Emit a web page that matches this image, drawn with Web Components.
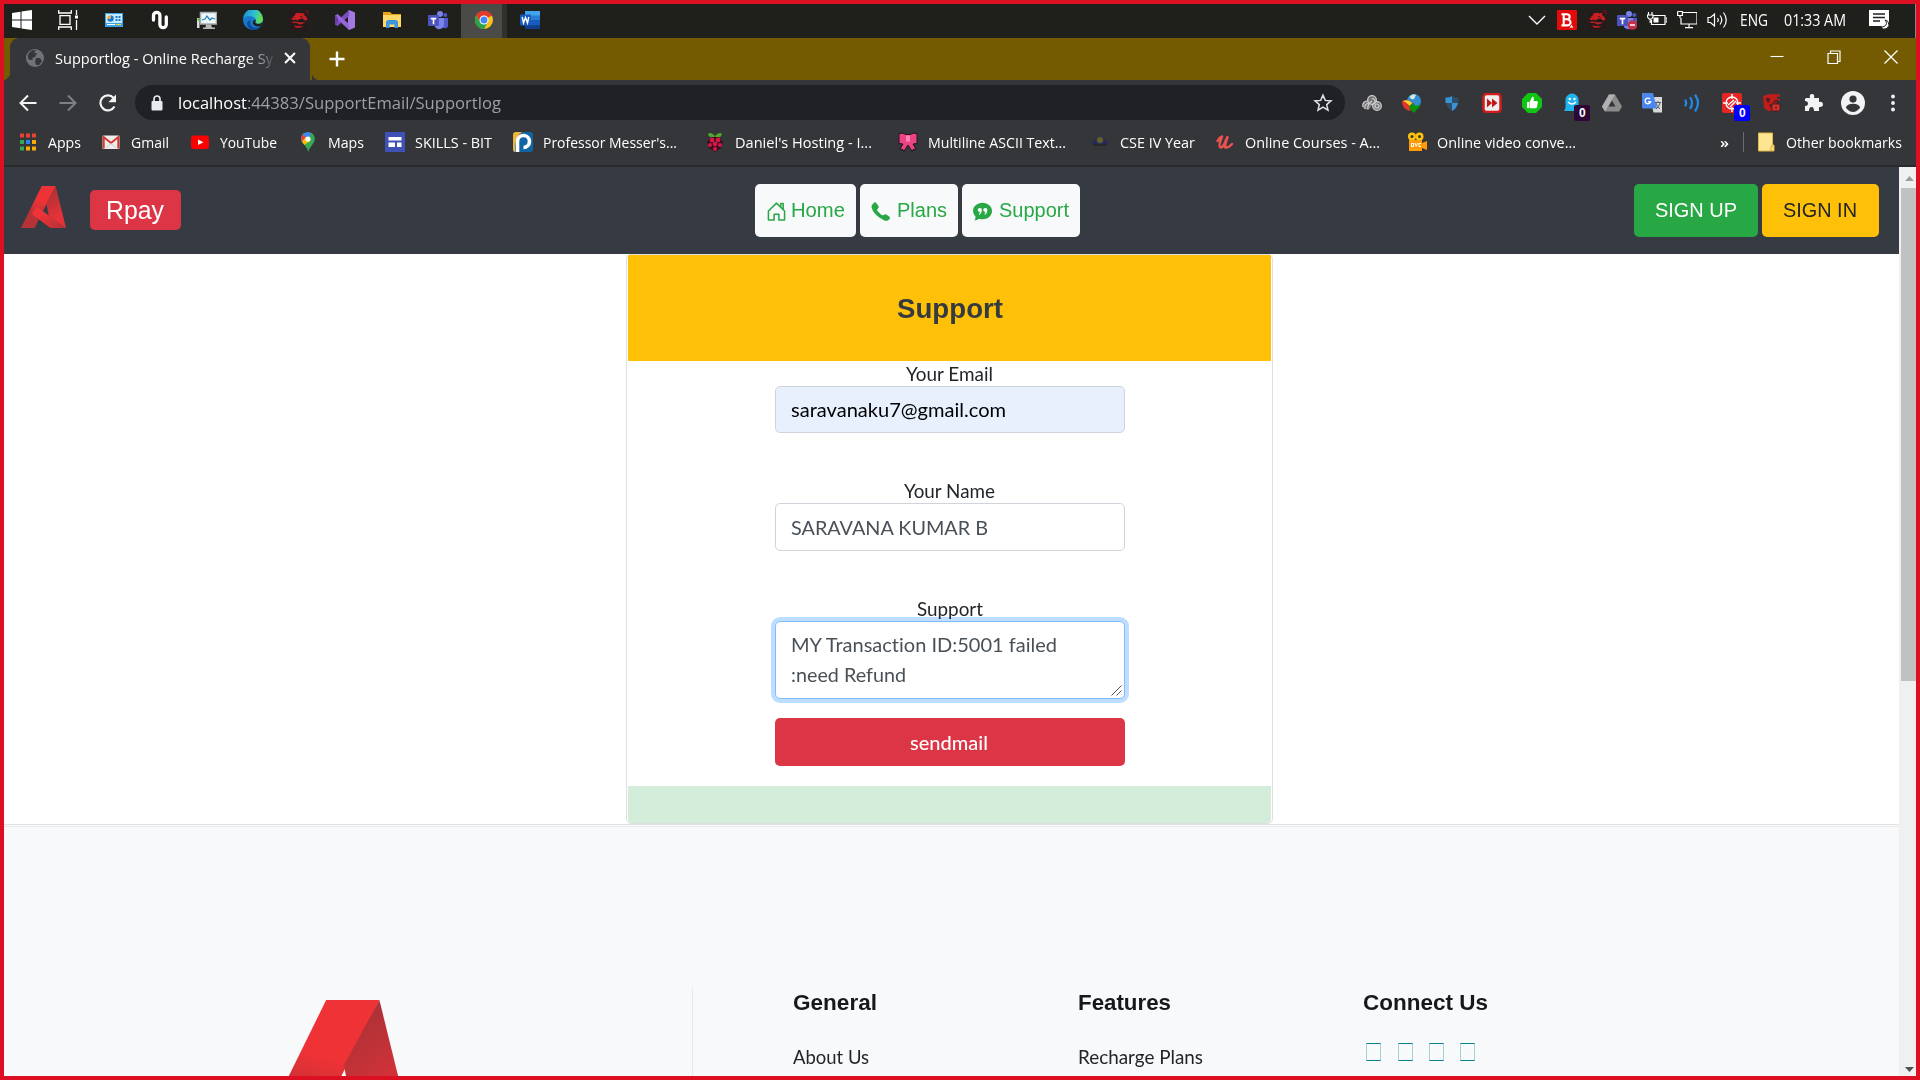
<!DOCTYPE html>
<html lang="en">
<head>
<meta charset="utf-8">
<title>Supportlog - Online Recharge System</title>
<style>
html,body{margin:0;padding:0;width:1920px;height:1080px;overflow:hidden;background:#dc1022}
</style>
</head>
<body>
<desktop-frame></desktop-frame>
<script>
const UI = '"Open Sans","Noto Sans",sans-serif';
const ARIAL = '"Liberation Sans",Arial,sans-serif';
const LATO = 'Lato,"Noto Sans",sans-serif';

const chromeArt = '<circle cx="10" cy="10" r="9" fill="#fbc21c"/><path d="M10 10 2.200 5.500A9 9 0 0 1 17.800 5.500z" fill="#e23b2e"/><path d="M10 5.500h7.800A9 9 0 0 0 2.200 5.500l3.900 6.700z" fill="#e23b2e"/><path d="M2.200 5.500A9 9 0 0 0 10 19l3.900-6.800L10 14 6.100 12.200z" fill="#2ba24c"/><circle cx="10" cy="10" r="4.500" fill="#fff"/><circle cx="10" cy="10" r="3.500" fill="#4285f4"/>';
const dragonArt = '<rect x=".5" y=".5" width="19" height="19" rx="2.500" fill="#231a1b" stroke="#30191c"/><path d="M15 .5h4.500V6Q18 2 15 .5z" fill="#6d101b"/><path d="M2 8.500L5.500 7 3.500 6.800 6.500 5 5.500 4.200Q9 2 12.500 3.200L16 3l-1.500 1.500Q17.500 6 18.500 10l-2.500.5-2.500-2-3 .5-1.500 1.500L6 9.500l-1.500 1zM1.500 12.500q4-1.500 7-.5 4 1 8.500-.5-3 2.700-6.500 3l-3-1.500zM5 15.500q5 1 9.500.8-4 2.500-8 1z" fill="#c91f22"/><path d="M11 5.800l3.500 1.400-3 .1z" fill="#231a1b"/>';
const teamsArt = '<circle cx="12" cy="4" r="3" fill="#7b83eb"/><circle cx="17.300" cy="5" r="2" fill="#5059c9"/><path d="M14 8h6v6a3 3 0 0 1-6 2z" fill="#5059c9"/><path d="M7 8h9v7a5 5 0 0 1-9 2z" fill="#7b83eb"/><rect y="5" width="11" height="11" rx="1" fill="#4b53bc"/><path d="M2.800 7.800h5.400v1.600H6.300v4.800H4.700V9.400H2.800z" fill="#fff"/>';
const logo = id => `<defs><linearGradient id="l${id}" x1=".6" y1="0" x2=".35" y2="1"><stop offset=".34" stop-color="#ee3236"/><stop offset=".7" stop-color="#b53236"/></linearGradient><linearGradient id="r${id}" x1="0" y1="0" x2=".3" y2="1"><stop offset="0" stop-color="#a23236"/><stop offset=".45" stop-color="#c43237"/><stop offset=".8" stop-color="#e43237"/></linearGradient><linearGradient id="c${id}" x1="0" y1="0" x2="1" y2="1"><stop offset=".3" stop-color="#f03338"/><stop offset="1" stop-color="#b03136"/></linearGradient></defs><path d="M58 0h39L38 126H0z" fill="url(#l${id})"/><path d="M97 0l29 126-48-36-7-39z" fill="url(#r${id})"/><path d="M44 62l82 64H82L33 86q-3-3 0-7z" fill="url(#c${id})"/>`;

const ICONS = {
windows:'<path d="M0 3l8.500-1.200v7.700H0zM9.500 1.600 20 0v9.500H9.500zM0 10.500h8.500v7.700L0 17zM9.500 10.500H20V20L9.500 18.400z" fill="#fff"/>',
taskview:'<g fill="none" stroke="#fff" stroke-width="1.300"><path d="M.7 0v3h12.600V0M.7 20v-3h12.600v3M2 5.700h10v8.600H2zM18.500 0v5M18.500 10v10"/></g><path d="M17 5.500h3v3h-3z" fill="#fff"/>',
panel:'<rect x="1" y="3" width="18" height="14" fill="#3ba3e4"/><rect x="2" y="4" width="16" height="9" fill="#c8ecff"/><circle cx="6.500" cy="8.500" r="3.300" fill="#fff"/><path d="M6.500 8.500V5.200a3.300 3.300 0 1 1-3.300 3.300z" fill="#2079c8"/><path d="M6.500 8.500H3.200a3.300 3.300 0 0 1 3.300-3.300z" fill="#f2a52c"/><path d="M11.500 6h2v2h-2zM14.500 6h2v2h-2zM11.500 9h2v2h-2zM14.500 9h2v2h-2z" fill="#2079c8"/><path d="M3 14.500h8" stroke="#fff"/><path d="M12 14.500h5" stroke="#ffd23b"/>',
nn:'<path d="M2.500 10V5.500a3.200 3.200 0 0 1 6.400 0v9a3.200 3.200 0 0 0 6.400 0V7" fill="none" stroke="#fff" stroke-width="3.300" stroke-linecap="round"/>',
monitor:'<rect x="3.500" y="2.500" width="16" height="11.500" fill="#eef8fc" stroke="#aaa" stroke-width="1.500"/><path d="M5 10l3-1 2-3 3 4 2-2 3 1" fill="none" stroke="#2a83b5" stroke-width="1.300"/><path d="M9 14.500h5l1 3h3V19H6v-1.500h2.500z" fill="#b8b8b8"/><path d="M0 8h2.500v10H0z" fill="#ddd"/><path d="M.5 8.500h2v2h-2z" fill="#31c52d"/>',
edge:'<defs><linearGradient id="eg" x1="0" y1="0" x2="1" y2=".3"><stop offset="0" stop-color="#1b83d4"/><stop offset=".6" stop-color="#2ec0d3"/><stop offset="1" stop-color="#63dc58"/></linearGradient></defs><circle cx="10" cy="10" r="10" fill="#1779cd"/><path d="M0 9A10 10 0 0 1 20 9c.5 4-5 6-7.500 4-1-1 1-2 0-4C10 5 2 5 0 9z" fill="url(#eg)"/><path d="M7.500 10c-2 6 4 10 10 6.500C14 22 5 21 4 14c0-3 3-4 3.500-4z" fill="#0f4c99"/><path d="M12.400 9.500c1 1.600-.8 2.500.3 3.600 2 1.600 5 .9 7-1.100l-1.700 3.700c-4 2.300-9-.7-8-3.700.3-1.500 1.500-2 2.400-2.500z" fill="#1f201c"/>',
dragon:dragonArt,
vs:'<path d="M14 0l6 2.500v15L14 20l-1-1V1z" fill="#a179e0"/><path d="M14 0v6L2.500 16 0 14.500V13z" fill="#7c4cc2"/><path d="M14 20v-6L2.500 4 0 5.500V7z" fill="#9466d8"/><path d="M0 5.500L2.500 7v6L0 14.500z" fill="#6a38ad"/>',
folder:'<path d="M1 2h7l2 2h9v13H1z" fill="#e8a317"/><path d="M1 5h18v12H1z" fill="#ffd869"/><path d="M4 18v-6.500L6 10h8l2 1.500V18h-3.500v-3.500h-5V18z" fill="#3c96dc"/>',
teams:teamsArt, chrome:chromeArt,
word:'<path d="M5 1h15v18H5z" fill="#41a5ee"/><path d="M5 5.500h15V10H5z" fill="#2b7cd3"/><path d="M5 10h15v4.500H5z" fill="#185abd"/><path d="M5 14.500h15V19H5z" fill="#103f91"/><rect y="4.500" width="11" height="11" rx="1" fill="#185abd"/><path d="M2.200 7l1.300 6L5.500 7.500 7.500 13l1.300-6" fill="none" stroke="#fff" stroke-width="1.400"/>',
chev:'<path d="M2 6l8 8 8-8" fill="none" stroke="#fff" stroke-width="1.400"/>',
bit:'<rect width="20" height="20" rx="1" fill="#e20b0b"/><path d="M4.500 4.200h5q3.200 0 3.200 2.500T9.500 9.300q4 .3 4 3.200t-4 2.900h-5M6.700 4v11.500M7 9.300h2.500" fill="none" stroke="#fff" stroke-width="2.100"/><path d="M12 18l2.500-4 2.500 4z" fill="#fff" stroke="#e20b0b" stroke-width=".8"/>',
teams2:teamsArt+'<circle cx="15.500" cy="15" r="4.800" fill="#c4314b"/><path d="M13 15h5" stroke="#fff" stroke-width="1.500"/>',
battery:'<g fill="none" stroke="#fff" stroke-width="1.200"><path d="M6 5.500h12v9H4.500V10"/><path d="M18.500 8h1.500v4h-1.500M1.500 2v3M5 2v3M.5 5h5.500v2L4.500 9H2L.5 7zM3.200 9v4"/></g><path d="M6.500 7.500h5v5h-5z" fill="#fff"/>',
network:'<g fill="none" stroke="#fff" stroke-width="1.200"><path d="M5.500 2.500H20v11.500H4V8M12 14v3.500M8 17.600h8M.6 1.500h4.800V5.500H3V8M.6 1.500v4H3"/></g>',
volume:'<g fill="none" stroke="#fff" stroke-width="1.200"><path d="M1 7.500h2.500L7.500 4v12l-4-3.500H1zM10.500 8q1.500 2 0 4M13 5.500q3.500 4.500 0 9M16.500 2.500q5.500 7.500 0 15"/></g>',
notif:'<path d="M0 0h20v16h-5v3l-3-3H0z" fill="#fff"/><path d="M4 4h12M4 7.500h12M4 11h7" stroke="#222" stroke-width="1.300"/><path d="M16 10q3.500 4-1 6.500-1.500.8-3.500.2Q14 20.500 18 18.500q3.500-3 1-7-1-1.200-3-1.500z" fill="#fff" stroke="#222"/>',
globe:'<circle cx="10" cy="10" r="9" fill="#70737a"/><path d="M3 7q1-3 4-4.500L11 2 9 5h3l-2 4-3 1 1 2H5l-2-1zM11 10h4l2 3-3 4h-3l-1-3z" fill="#35363a"/>',
x:'<path d="M4.500 4.500l11 11M15.500 4.500l-11 11" stroke="#fff" stroke-width="2.300"/>',
plus:'<path d="M10 2.500v15M2.500 10h15" stroke="#fff" stroke-width="2.400"/>',
min:'<path d="M3.500 9.500h13" stroke="#fff" stroke-width="1.100"/>',
restore:'<path d="M4 6.500h9.500V16.500H4zM6.500 6.500V4H16v10.500h-2.500" fill="none" stroke="#fff" stroke-width="1.200"/>',
close:'<path d="M3.500 3.500l13 13M16.500 3.500l-13 13" stroke="#fff" stroke-width="1.300"/>',
back:'<path d="M18.500 10H3M10 2.500L2.500 10l7.500 7.500" fill="none" stroke="#f1f3f4" stroke-width="2"/>',
fwd:'<path d="M1.500 10H17M10 2.500l7.500 7.500-7.500 7.500" fill="none" stroke="#7d8085" stroke-width="2"/>',
reload:'<path d="M16.500 13.500A7.500 7.500 0 1 1 15.600 5" fill="none" stroke="#f1f3f4" stroke-width="2.200"/><path d="M18 1.500v7.700h-7.700z" fill="#f1f3f4"/>',
lock:'<rect x="4.500" y="8" width="11" height="9.500" rx="1" fill="#e8eaed"/><path d="M7 8.500V6a3 3 0 0 1 6 0v2.500" fill="none" stroke="#e8eaed" stroke-width="1.700"/>',
star:'<path d="M10 2.200l2.300 5.200 5.700.5-4.300 3.700 1.300 5.600-5-3-5 3 1.300-5.600L2 7.900l5.700-.5z" fill="none" stroke="#e1e3e6" stroke-width="1.500"/>',
knot:'<circle cx="10" cy="8" r="5" fill="#777"/><circle cx="5" cy="12" r="4.500" fill="#777"/><circle cx="15" cy="13" r="4.500" fill="#777"/><g fill="none" stroke="#cfcfcf" stroke-width="1.200"><circle cx="10" cy="7" r="4.300"/><circle cx="15" cy="13" r="4.300"/><circle cx="15" cy="13" r="2"/><path d="M.8 14q-.5-6 5-6M3 16q-1-5 4-6M6 16.500q-1-5 4-8.500M10 5.500q3 0 3 3"/></g>',
idm:'<circle cx="12" cy="8" r="7" fill="#318ed5"/><path d="M7.500 4q3-4 6.500-2l-2 4q-3 1-4.500-2z" fill="#d5e8d8"/><path d="M0 8q7-3 11 3l-3 7Q0 16 0 8z" fill="#e43429"/><path d="M1 8q6-2 9 2l-2 3Q4 9 1 8z" fill="#ffd62d"/><path d="M8 12l4-2 1 3 6-1-7 8-5-5z" fill="#0b930b"/>',
shield:'<path d="M10 3q3 2 6.500 1.500Q17 14 10 18 3 14 3.500 4.500 7 5 10 3z" fill="#314d65"/><path d="M10 3v7H3.600q-.3-3 0-5.500Q7 5 10 3zM10 10h6q-1 5-6 8z" fill="#3893d7"/>',
ffw:'<rect x="1.500" y="1" width="17" height="18" rx="3" fill="#eee" stroke="#d21c1c" stroke-width="2.500"/><path d="M5 5.500l5 4.500-5 4.500zM10 5.500l5.500 4.500-5.500 4.500z" fill="#c21515"/>',
thumb:'<path d="M6 0h8l6 6v8l-6 6H6l-6-6V6z" fill="#12c512"/><path d="M5 9h2v6H5zM7.500 9l3-5.500q2 .3 1 4.500H15q1 0 .8 1.500L15 14q-.3 1.200-1.500 1.200h-6z" fill="#fff"/>',
ghost:'<path d="M3.500 15V7a6.500 6.500 0 0 1 13 0v8l2 3H2z" fill="#1fb3ef"/><circle cx="7.800" cy="6" r="1.200" fill="#fff"/><circle cx="12.500" cy="6" r="1.200" fill="#fff"/><path d="M6 9q4 4 8 0" fill="none" stroke="#fff" stroke-width="1.400"/>',
drive:'<path d="M7 1.500h6l7 12-3 5H3l-3-5z" fill="#8b8b8b"/><path d="M7 1.500h6l-3 5-7 12-3-5z" fill="#b1b1b1"/><path d="M10 7.500l3.500 6h-7z" fill="#35363a"/>',
translate:'<path d="M8 4h12.500v15.500h-9z" fill="#d8d8d8"/><path d="M0 0h11l4 15.500H1q-1 0-1-1z" fill="#4a87ee"/><path d="M8 6a2.800 2.800 0 1 0 .6 2.700H6.200" fill="none" stroke="#fff" stroke-width="1.400"/><path d="M13 9.500h6M16 8v2M14 10q1 4 4 6M18 10q-1 4-4 6" fill="none" stroke="#52616d"/>',
sound:'<g fill="none" stroke="#2189e8" stroke-width="2.300" stroke-linecap="round"><path d="M3.500 7.500q1.500 2.500 0 5M8.500 5q3 5 0 10M13.500 2.500q5 7.500 0 15"/></g>',
target:'<rect width="20" height="20" rx="2" fill="#e62525"/><g fill="none" stroke="#fff" stroke-width="1.400"><circle cx="10" cy="10" r="6"/><path d="M10 1v5M10 14v5M1 10h5M14 10h5M6 12l6-5M8 14l6-6"/></g>',
redlock:'<path d="M1 3q7-3 17-1.500v2.200h-3V6h3v1.500h-3L13 17l-7 1-4-3z" fill="#c01c1c"/><path d="M4 5h4l-1 5-2-1zM7 12l3-2-1 5z" fill="#482020"/><rect x="10" y="11" width="8" height="7" rx="1" fill="#d63131" stroke="#4a1c1c"/><path d="M12 11V9q2-2.500 4 0v2M14 13.500v2.500" fill="none" stroke="#502020" stroke-width="1.300"/>',
puzzle:'<path d="M3 5h4q-1-4 2-4t2 4h5v4q4-1 4 2.300T16 14v4h-5q0-4-2.500-4T6 18H2v-5q3 0 3-2.500T2 8V6z" fill="#f1f3f4"/>',
person:'<circle cx="10" cy="10" r="10" fill="#f1f3f4"/><circle cx="10" cy="6.700" r="3" fill="#35363a"/><path d="M4 14q1-3.300 6-3.300t6 3.300q-6 7-12 0z" fill="#35363a"/>',
dots:'<g fill="#f1f3f4"><circle cx="10" cy="3.500" r="1.900"/><circle cx="10" cy="10" r="1.900"/><circle cx="10" cy="16.500" r="1.900"/></g>',
apps:'<path d="M2 1.500h4v4H2zM8 1.500h4v4H8zM14 1.500h4v4h-4z" fill="#ea4335"/><path d="M2 8h4v4H2zM2 14.500h4v4H2z" fill="#34a853"/><path d="M8 8h4v4H8z" fill="#2a84f5"/><path d="M14 8h4v4h-4zM8 14.500h4v4H8zM14 14.500h4v4h-4z" fill="#fbab05"/>',
gmail:'<rect x="1.500" y="3.500" width="17" height="13.500" rx="1" fill="#eee"/><path d="M2.700 16.500V5L10 11l7.300-6v11.500" fill="none" stroke="#d8392d" stroke-width="2"/><path d="M5 16l5-4.500 5 4.500" fill="none" stroke="#ccc"/>',
youtube:'<rect x="1" y="3.500" width="18" height="13.500" rx="3" fill="#f00"/><path d="M8 7.500l5.500 2.800L8 13z" fill="#fff"/>',
maps:'<path d="M3.200 6.500Q3.500.2 10 .2t6.800 6.800q0 3-3 6.500-3 3.500-3.600 6.500Q9.500 16.500 6.500 13 3 10 3.200 6.500z" fill="#34a853"/><path d="M3.200 6.500Q3.500.2 10 .2l3.800 1.100-8.500 10Q3 9 3.200 6.500z" fill="#4285f4"/><path d="M4.800 2.600L8 5.300l-3.900 4.600q-2-4 .7-7.300z" fill="#ea4335"/><path d="M4 9.500l4-4.700 4.500 4L6.400 13z" fill="#fbbc04"/><circle cx="10" cy="7" r="2.600" fill="#fff"/>',
skills:'<rect width="20" height="20" fill="#3f51b5"/><path d="M3.500 5h13v3.500h-13zM3.500 10.500H10V15H3.500zM12 10.500h4.500V15H12z" fill="#fff"/>',
messer:'<rect width="20" height="20" rx="3" fill="#1265a5"/><path d="M3 0h6Q1 5 2 20 0 20 0 17V3q0-3 3-3z" fill="#efb63a"/><path d="M4.500 20V9a6 6 0 1 1 6 6.500" fill="none" stroke="#fff" stroke-width="3.600"/>',
pi:'<path d="M10 4Q6-1 3 2q1 4 6 4zM10 4q4-5 7-2-1 4-6 4z" fill="#50a72b"/><path d="M6 5h8l4 5-2 6-6 4-6-4-2-6z" fill="#351020"/><g fill="#d51745"><circle cx="7" cy="8" r="2.400"/><circle cx="13" cy="8" r="2.400"/><circle cx="10" cy="12" r="2.400"/><circle cx="5" cy="13" r="2"/><circle cx="15" cy="13" r="2"/><circle cx="10" cy="17" r="2"/></g>',
bow:'<path d="M1 1.500q4-1 7 1h4q3-2 7-1v10l-4 .5 3 5-3 .5-.8 2L10 13l-4.200 6.500-.8-2-3-.5 3-5-4-.5z" fill="#ed4385" stroke="#23161c"/><path d="M8 3.500h4v6H8z" fill="#ff84b1"/>',
cse:'<path d="M4 8h12l2 4H2z" fill="#25285a"/><circle cx="10" cy="8" r="3.500" fill="#686126" stroke="#29315f"/><path d="M3 13h14" stroke="#28282b" stroke-width="2"/>',
udemy:'<path d="M2.500 9q2-3.500 4.500-4.500-4 10-1.500 11 3 0 5.500-7.500l1.500-3q-3.500 10-2 10.500 3 .5 6.500-3.500" fill="none" stroke="#eb524f" stroke-width="2.500" stroke-linecap="round" stroke-linejoin="round"/>',
ovc:'<circle cx="5" cy="4.500" r="4" fill="#ffc20a"/><circle cx="12.500" cy="4.500" r="4" fill="#ffc20a"/><circle cx="5" cy="4.500" r="1.500" fill="#35363a"/><circle cx="12.500" cy="4.500" r="1.500" fill="#35363a"/><path d="M2 8h13v3l5-2v9l-5-2v3H2z" fill="#ff9c08"/><path d="M4.500 11.500h2v3h-2zM8 11l1.200 3.500L10.500 11M14 11.500h-2v3h2" fill="none" stroke="#fff"/>',
note:'<path d="M2.500 1h14v12h1.500v6H2.500z" fill="#ffe592" stroke="#dfb743"/><path d="M15 19v-4l2-2" fill="none" stroke="#dfb743" stroke-width="1.300"/>',
house:'<path d="M1.500 9.500L10 1.200l8.500 8.300V19h-6v-6h-5v6h-6zM14.500 5.500v-4h2.500v6.500" fill="none" stroke="#28a745" stroke-width="1.600" stroke-linejoin="round"/>',
phone:'<path d="M1.500 2.500L3.300.6Q4.500-.2 5.500 1L7.800 4.200q.7 1 0 2L6.600 7.700q-.3 1 .5 2.100l4 3.800q1 .7 2 .2l1.500-.7q1-.4 1.900.3l2.900 2q1 .9.400 1.900l-1.600 1.800q-1.600 1.300-4.700 0Q8 16.500 4.500 12.500 1.200 9 .5 5.500.4 3.600 1.500 2.500z" fill="#28a745"/>',
quote:'<path d="M10 .8c5.500 0 10 3.800 10 8.700s-4.500 8.700-10 8.700q-2 0-3.600-.6Q4.500 19.300 1.400 19.600q1.500-1.800 1.200-4.400Q0 12.800 0 9.500C0 4.600 4.500.8 10 .8z" fill="#28a745"/><path d="M5 8.500a2.200 2.200 0 1 1 4.400 0q0 3-2.500 4.800l-.8-.8q1.300-1 1.300-1.900Q5 10.500 5 8.500zM10.800 8.500a2.200 2.200 0 1 1 4.400 0q0 3-2.500 4.800l-.8-.8q1.300-1 1.300-1.900-2.400-.1-2.400-2.100z" fill="#fff"/>'
};

const fits = new Set();
function define(name, css, html, extra) {
  customElements.define(name, class extends HTMLElement {
    connectedCallback() {
      if (this.shadowRoot) return;
      const t = document.createElement('template');
      t.innerHTML = `<style>*{box-sizing:border-box}${css}</style>${typeof html === 'function' ? html(this) : html}`;
      this.attachShadow({mode:'open'}).append(t.content.cloneNode(true));
      if (extra) extra(this);
    }
  });
}

/* Text condensed or widened to a given width */
define('fit-text', ':host{display:block;white-space:pre;flex:none;overflow:visible;font-variant-ligatures:none}span{display:inline-block;transform-origin:0 50%}', '<span><slot></slot></span>', el => {
  el.style.width = el.getAttribute('w') + 'px';
  fits.add(el);
});
function fitAll() {
  for (const el of fits) {
    const s = el.shadowRoot.querySelector('span');
    s.style.transform = `scaleX(${el.getAttribute('w') / s.getBoundingClientRect().width})`;
  }
}
define('ui-icon', ':host{display:block;flex:none;width:20px;height:20px}svg{display:block;width:100%;height:100%}', el => `<svg viewBox="0 0 20 20">${ICONS[el.getAttribute('name')]}</svg>`);
define('brand-logo', ':host{display:block;flex:none}svg{display:block;width:100%;height:100%}', el => `<svg viewBox="0 0 126 126" preserveAspectRatio="none">${logo('g')}</svg>`);

define('task-cell', ':host{display:flex;width:46.200px;height:34px;justify-content:center;align-items:center;flex:none;padding-bottom:3px;box-sizing:border-box}:host([active]){background:linear-gradient(90deg,#4a4a47 41px,#30302d 41px)}:host([active]) ui-icon{margin-right:0}', el => `<ui-icon name="${el.getAttribute('name')}"></ui-icon>`);
define('task-bar', `:host{display:flex;height:34px;background:#1f201c;color:#fff;font:16px ${UI};align-items:center;justify-content:space-between;flex:none}
 div{display:flex;align-items:center}.l{margin-left:-5px}.t{gap:10px;height:34px;padding-bottom:3px}.e{height:34px;border-right:1px solid #888;width:17px;margin-bottom:-3px}`,
 `<div class="l">${['windows','taskview','panel','nn','monitor','edge','dragon','vs','folder','teams','chrome','word'].map(n=>`<task-cell name="${n}"${n==='chrome'?' active':''}></task-cell>`).join('')}</div>
 <div class="t">${['chev','bit','dragon','teams2','battery','network','volume'].map(n=>`<ui-icon name="${n}"></ui-icon>`).join('')}<fit-text w="28" style="margin-left:3px">ENG</fit-text><fit-text w="62" style="margin-left:6px">01:33 AM</fit-text><ui-icon name="notif" style="margin-left:13px"></ui-icon><div class="e"></div></div>`);

define('tab-strip', `:host{display:flex;height:42px;background:#745b02;color:#fff;font:15px ${UI};align-items:center;flex:none}
 .tab{margin-left:6px;width:300px;height:42px;background:#35363a;border-radius:9px 9px 0 0;display:flex;align-items:center;padding:0 0 2px 15px}
 .tab::before,.tab::after{content:"";width:8px;height:8px;align-self:flex-end;margin-bottom:-2px;flex:none}
 .tab::before{margin-left:-23px;margin-right:15px;background:radial-gradient(circle at 0 0,#745b02 8px,#35363a 8.500px)}
 .tab::after{margin-left:13px;background:radial-gradient(circle at 100% 0,#745b02 8px,#35363a 8.500px)}
 fit-text{margin-left:10px;-webkit-mask-image:linear-gradient(90deg,#000 190px,transparent 222px)}
 .w{margin-left:auto;display:flex;gap:37px;margin-right:15px;padding-bottom:5px}`,
 `<div class="tab"><ui-icon name="globe"></ui-icon><fit-text w="218">Supportlog - Online Recharge Sy</fit-text><ui-icon name="x" style="width:18px;height:18px;margin-left:8px"></ui-icon></div><ui-icon name="plus" style="margin-left:17px"></ui-icon><div class="w"><ui-icon name="min"></ui-icon><ui-icon name="restore"></ui-icon><ui-icon name="close"></ui-icon></div>`);

define('ext-icon', ':host{display:flex;position:relative;width:20px;height:20px;flex:none}b{position:absolute;left:12px;top:12px;width:16px;height:16px;border-radius:2px;color:#fff;font:bold 12px/16px "Liberation Sans",sans-serif;text-align:center;background:#2d0735}:host([blue]) b{background:#00f}', el => `<ui-icon name="${el.getAttribute('name')}"></ui-icon>${el.hasAttribute('count')?`<b>${el.getAttribute('count')}</b>`:''}`);
define('nav-toolbar', `:host{display:flex;height:45px;background:#35363a;align-items:center;flex:none;font:17px ${UI};padding-left:14px}
 .n{display:flex;gap:20px}.u{display:flex;align-items:center;width:1210px;height:35px;border-radius:18px;background:#202124;margin-left:17px;padding-left:12px;color:#fff}
 .p{color:#9aa0a6}.s{margin-left:auto;margin-right:12px}.e{display:flex;gap:20.050px;margin-left:17px;align-items:center}`,
 `<div class="n"><ui-icon name="back"></ui-icon><ui-icon name="fwd"></ui-icon><ui-icon name="reload"></ui-icon></div>
 <div class="u"><ui-icon name="lock"></ui-icon><fit-text w="69" style="margin-left:11px">localhost</fit-text><fit-text class="p" w="254">:44383/SupportEmail/Supportlog</fit-text><ui-icon class="s" name="star"></ui-icon></div>
 <div class="e">${['knot','idm','shield','ffw','thumb','ghost','drive','translate','sound','target','redlock','puzzle'].map(n=>`<ext-icon name="${n}"${n==='ghost'?' count="0"':n==='target'?' count="0" blue':''}></ext-icon>`).join('')}<ui-icon name="person" style="width:24px;height:24px;margin:0 -2px"></ui-icon><ui-icon name="dots"></ui-icon></div>`);

define('book-mark', ':host{display:flex;gap:10px;align-items:center;flex:none}', el => `<ui-icon name="${el.getAttribute('icon')}"></ui-icon><fit-text w="${el.getAttribute('w')}">${el.textContent}</fit-text>`);
const marks = [['apps','Apps',33,83],['gmail','Gmail',38,89],['youtube','YouTube',57,108],['maps','Maps',36,87],['skills','SKILLS - BIT',77,128],['messer',"Professor Messer's...",134,192],['pi',"Daniel's Hosting - I...",137,193],['bow','Multiline ASCII Text...',138,192],['cse','CSE IV Year',75,125],['udemy','Online Courses - A...',135,192],['ovc','Online video conve...',139,313]];
define('bookmark-bar', `:host{display:flex;height:42px;background:#35363a;border-bottom:2px solid #28292c;color:#fff;font:15px ${UI};align-items:center;padding:0 0 6px 14px;flex:none}
 i{width:1px;height:20px;background:#6a6b6e;margin:0 12px 0 14px}`,
 marks.map(([i,t,w,s])=>`<book-mark icon="${i}" w="${w}" style="width:${s}px">${t}</book-mark>`).join('') + '<fit-text w="9" style="font-weight:600">»</fit-text><i></i><book-mark icon="note" w="116">Other bookmarks</book-mark>');

define('nav-button', `:host{display:flex;height:53px;align-items:center;border-radius:5px;background:#f8f9fa;color:#28a745;font:20px ${ARIAL};flex:none}ui-icon{width:19px;height:19px;margin-top:3px}`,
 el => (el.hasAttribute('icon')?`<ui-icon name="${el.getAttribute('icon')}"></ui-icon>`:'')+`<fit-text w="${el.getAttribute('w')}" style="margin-left:${el.getAttribute('gap')||0}px">${el.textContent}</fit-text>`);
define('site-nav', `:host{display:flex;height:87px;background:#363a42;align-items:center;flex:none;padding:0 20px 2px 17px}
 brand-logo{width:45px;height:42px;margin-bottom:6px}.r{width:91px;height:40px;margin-left:24px;border-radius:5px;background:#dc3545;color:#fff;font:25px/40px ${ARIAL};padding-left:16px}
 .c{display:flex;gap:4px;margin-left:574px;margin-top:1px}.s{display:flex;gap:4px;margin-left:auto;margin-top:1px}`,
 `<brand-logo></brand-logo><div class="r"><fit-text w="58">Rpay</fit-text></div>
 <div class="c"><nav-button icon="house" w="54" gap="5" style="width:101px;padding-left:12px">Home</nav-button><nav-button icon="phone" w="50" gap="7" style="width:98px;padding-left:11px">Plans</nav-button><nav-button icon="quote" w="70" gap="7" style="width:118px;padding-left:11px">Support</nav-button></div>
 <div class="s"><nav-button w="82" style="width:124px;padding-left:21px;background:#28a745;color:#fff">SIGN UP</nav-button><nav-button w="74" style="width:117px;padding-left:21px;background:#ffc107;color:#212529">SIGN IN</nav-button></div>`);

define('form-field', `:host{display:flex;flex-direction:column;align-items:center;width:350px;font:19px ${LATO};color:#212529;flex:none}
 .l{height:25px;line-height:25px;display:flex;position:relative;z-index:1}
 .b{width:350px;height:48px;border:1px solid #ced4da;border-radius:5px;background:#fff;padding:8px 15px;font-size:20px;line-height:30px;color:#495057;position:relative}
 :host([filled]) .b{background:#e8f0fe;color:#000;height:47px;padding-top:7px}
 :host([focused]) .b{height:78px;padding-top:7px;border-color:#80bdff;box-shadow:0 0 0 4px #bfdeff}
 svg{position:absolute;right:2px;bottom:2px;width:11px;height:11px}`,
 el => `<div class="l"><fit-text w="${el.getAttribute('lw')}">${el.getAttribute('label')}</fit-text></div><div class="b">${el.getAttribute('lines').split('|').map(s=>{const [t,w]=s.split('~');return `<fit-text w="${w}">${t}</fit-text>`}).join('')}${el.hasAttribute('focused')?'<svg viewBox="0 0 11 11"><path d="M.5 10.500l10-10M5.500 10.500l5-5" stroke="#555"/></svg>':''}</div>`);
define('support-card', `:host{display:flex;flex-direction:column;align-items:center;width:647px;height:570px;border:1px solid #dfdfdf;border-radius:5px;padding:0 1px;background:#fff;flex:none}
 .h{flex:none;width:100%;height:106px;background:#ffc107;color:#343a40;font:bold 28px/107px ${ARIAL};display:flex;justify-content:center;overflow:hidden}
 .g{display:flex;flex-direction:column;align-items:center;flex:none}
 .b{flex:none;width:350px;height:48px;border-radius:5px;background:#dc3545;color:#fff;display:flex;justify-content:center;font:500 20px/48px ${LATO};margin-top:19px;padding-right:1px}
 .f{flex:none;width:100%;height:37px;background:#d4edda;margin-top:20px;border-radius:0 0 4px 4px}`,
 `<div class="h"><fit-text w="106">Support</fit-text></div><div class="g">
 <form-field filled label="Your Email" lw="87" lines="saravanaku7@gmail.com~215"></form-field>
 <form-field label="Your Name" lw="91" lines="SARAVANA KUMAR B~197" style="margin-top:45px"></form-field>
 <form-field focused label="Support" lw="66" lines="MY Transaction ID:5001 failed~266|:need Refund~115" style="margin-top:45px"></form-field></div>
 <div class="b"><fit-text w="78">sendmail</fit-text></div><div class="f"></div>`);

define('link-column', `:host{display:block;flex:none;width:285.200px;font:20px ${LATO};color:#212529}
 .h{font:bold 22.400px/32px ${ARIAL};color:#16181b;height:54px}.t{height:30px;line-height:30px}
 .s{display:flex;gap:16.300px;padding:2px 0 0 3px}.s i{width:15px;height:18px;border:1px solid #a9cfd3;border-top-color:#078391;border-bottom-color:#078391}`,
 el => `<div class="h"><fit-text w="${el.getAttribute('hw')}">${el.getAttribute('head')}</fit-text></div>` + (el.hasAttribute('social') ? '<div class="s"><i></i><i></i><i></i><i></i></div>' : `<div class="t"><fit-text w="${el.getAttribute('w')}">${el.textContent}</fit-text></div>`));
define('site-footer', `:host{display:flex;flex:1;border-top:1px solid #ececee;background:#f8f9fb;padding:160px 0 0 243px;overflow:hidden}
 brand-logo{width:172px;height:161px;margin-top:13px}.d{width:1px;background:#e8e9eb;margin:0 0 0 273px}.c{display:flex;margin-left:100px}`,
 `<brand-logo></brand-logo><div class="d"></div><div class="c"><link-column head="General" hw="84" w="76">About Us</link-column><link-column head="Features" hw="93" w="125">Recharge Plans</link-column><link-column head="Connect Us" hw="125" social></link-column></div>`);

define('scroll-track', `:host{display:flex;flex-direction:column;justify-content:space-between;width:17px;background:#f0f0f0;flex:none}
 svg{display:block;width:17px;height:21px}.t{height:493px;margin-left:2px;background:#c1c1c1}.e{flex:1}`,
 `<svg viewBox="0 0 17 21"><path d="M6 14l4.500-5 4.500 5z" fill="#9d9d9d"/></svg><div class="t"></div><div class="e"></div><svg viewBox="0 0 17 21"><path d="M6 12h9l-4.500 5z" fill="#505050"/></svg>`);
define('web-page', `:host{display:flex;flex:1;min-height:0;background:#fff}.p{flex:1;display:flex;flex-direction:column;min-width:0;overflow:hidden}
 .m{display:flex;padding-left:622px;height:572px;border-bottom:1px solid #fafafa;background:linear-gradient(#fff 570px,#e3e3e4 570px,#e3e3e4 571px,#fff 571px)}`,
 `<div class="p"><site-nav></site-nav><div class="m"><support-card></support-card></div><site-footer></site-footer></div><scroll-track></scroll-track>`);

define('desktop-frame', ':host{display:flex;flex-direction:column;box-sizing:border-box;width:1920px;height:1080px;border:4px solid #dc1022;overflow:hidden}', '<task-bar></task-bar><tab-strip></tab-strip><nav-toolbar></nav-toolbar><bookmark-bar></bookmark-bar><web-page></web-page>');
fitAll();
</script>
</body>
</html>
